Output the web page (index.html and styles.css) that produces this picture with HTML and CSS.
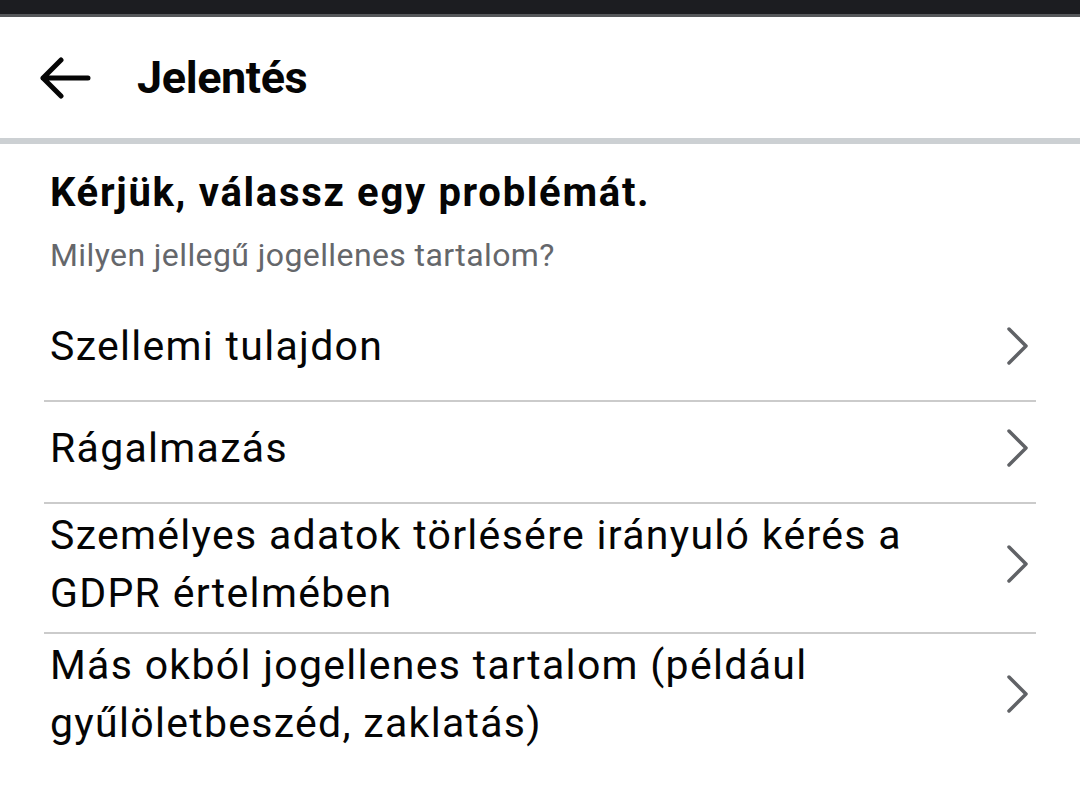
FILE: index.html
```html
<!DOCTYPE html>
<html lang="hu">
<head>
    <meta charset="UTF-8">
    <meta name="viewport" content="width=device-width, initial-scale=1.0">
    <title>Jelentés</title>
    <link rel="stylesheet" href="styles.css">
</head>
<body>
    <div class="status-bar"></div>

    <header class="top-bar">
        <button class="back-btn" aria-label="Vissza">
            <svg width="52" height="42" viewBox="0 0 52 42">
                <path d="M3 21 H48 M21 3 L3 21 L21 39" fill="none" stroke="#050505" stroke-width="5" stroke-linecap="round" stroke-linejoin="round"/>
            </svg>
        </button>
        <h1>Jelentés</h1>
    </header>

    <main class="report">
        <h2>Kérjük, válassz egy problémát.</h2>
        <p class="hint">Milyen jellegű jogellenes tartalom?</p>

        <ul class="options">
            <li class="option">
                <span>Szellemi tulajdon</span>
                <svg class="chevron" width="24" height="40" viewBox="0 0 24 40"><path d="M4 3 L21 20 L4 37" /></svg>
            </li>
            <li class="option">
                <span>Rágalmazás</span>
                <svg class="chevron" width="24" height="40" viewBox="0 0 24 40"><path d="M4 3 L21 20 L4 37" /></svg>
            </li>
            <li class="option">
                <span>Személyes adatok törlésére irányuló kérés a GDPR értelmében</span>
                <svg class="chevron" width="24" height="40" viewBox="0 0 24 40"><path d="M4 3 L21 20 L4 37" /></svg>
            </li>
            <li class="option">
                <span>Más okból jogellenes tartalom (például gyűlöletbeszéd, zaklatás)</span>
                <svg class="chevron" width="24" height="40" viewBox="0 0 24 40"><path d="M4 3 L21 20 L4 37" /></svg>
            </li>
        </ul>
    </main>
</body>
</html>
```

FILE: styles.css
```css
body {
    margin: 0;
    background: #ffffff;
    font-family: Roboto, "Liberation Sans", Arial, sans-serif;
    color: #050505;
}
.status-bar {
    height: 14px;
    background-color: #1c1d21;
    border-bottom: 3px solid #55575a;
}
.top-bar {
    display: flex;
    align-items: center;
    height: 127px;
    padding: 0 0 0 40px;
    border-bottom: 6px solid #ccd0d3;
    box-sizing: border-box;
}
.back-btn {
    background: none;
    border: none;
    padding: 0;
    margin: 0 45px 0 0;
    display: flex;
    cursor: pointer;
}
.top-bar h1 {
    margin: 0;
    font-size: 45px;
    font-weight: 700;
    line-height: 54px;
    letter-spacing: -0.4px;
}
.report {
    padding: 27px 44px 0;
}
.report h2 {
    margin: 0;
    padding-left: 6px;
    font-size: 40px;
    font-weight: 700;
    line-height: 44px;
    letter-spacing: 1.7px;
}
.hint {
    margin: 21px 0 0;
    padding-left: 6px;
    font-size: 32px;
    line-height: 38px;
    letter-spacing: 0.4px;
    color: #65676b;
}
.options {
    list-style: none;
    margin: 26px 0 0;
    padding: 0;
}
.option {
    display: flex;
    align-items: center;
    justify-content: space-between;
    min-height: 88px;
    padding: 2px 7px 10px 6px;
    border-bottom: 2px solid #cbcbcb;
    font-size: 41px;
    line-height: 58px;
    letter-spacing: 1.3px;
    cursor: pointer;
}
.option:last-child {
    border-bottom: none;
}
.option span {
    flex: 1;
    padding-right: 60px;
}
.chevron {
    flex-shrink: 0;
}
.chevron path {
    fill: none;
    stroke: #606266;
    stroke-width: 3.5;
    stroke-linecap: round;
    stroke-linejoin: round;
}
```
